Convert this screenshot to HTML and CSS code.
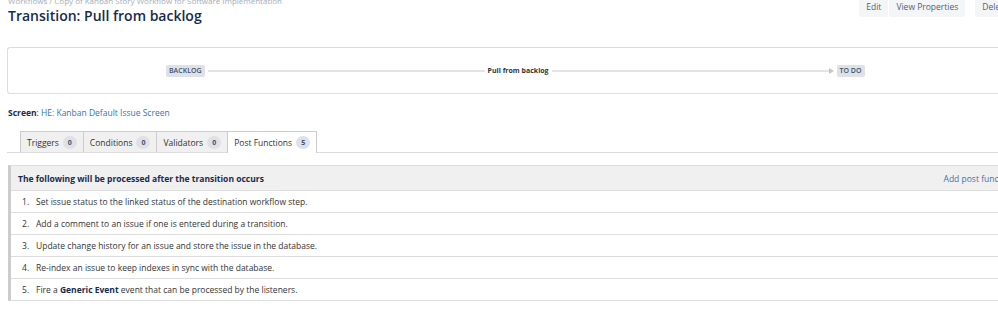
FILE: index.html
```html
<!DOCTYPE html>
<html lang="en">
<head>
    <meta charset="UTF-8">
    <title>Transition: Pull from backlog</title>
    <link rel="stylesheet" href="styles.css">
</head>
<body>

<div class="page-header">
    <div class="header-main">
        <div class="breadcrumbs">Workflows / Copy of Kanban Story Workflow for Software Implementation</div>
        <h1>Transition: Pull from backlog</h1>
    </div>
    <div class="header-actions">
        <a class="btn" href="#">Edit</a>
        <a class="btn" href="#">View Properties</a>
        <a class="btn btn-gap" href="#">Delete</a>
    </div>
</div>

<div class="diagram">
    <span class="status">BACKLOG</span>
    <span class="line"></span>
    <span class="transition-name">Pull from backlog</span>
    <span class="line"></span>
    <span class="arrow"></span>
    <span class="status">TO DO</span>
</div>

<p class="screen"><strong>Screen</strong>: <a href="#">HE: Kanban Default Issue Screen</a></p>

<div class="tabs">
    <a class="tab" href="#">Triggers <span class="badge">0</span></a>
    <a class="tab" href="#">Conditions <span class="badge">0</span></a>
    <a class="tab" href="#">Validators <span class="badge">0</span></a>
    <a class="tab active" href="#">Post Functions <span class="badge">5</span></a>
</div>

<div class="functions">
    <div class="functions-head">
        <strong>The following will be processed after the transition occurs</strong>
        <a href="#">Add post function</a>
    </div>
    <ol class="function-list">
        <li>Set issue status to the linked status of the destination workflow step.</li>
        <li>Add a comment to an issue if one is entered during a transition.</li>
        <li>Update change history for an issue and store the issue in the database.</li>
        <li>Re-index an issue to keep indexes in sync with the database.</li>
        <li>Fire a <strong>Generic Event</strong> event that can be processed by the listeners.</li>
    </ol>
</div>

</body>
</html>
```

FILE: styles.css
```css
body {
    margin: 0;
    padding: 0 0 0 8px;
    font-family: "Open Sans", Arial, sans-serif;
    font-size: 8.5px;
    color: #333;
    overflow: hidden;
    width: 1007px;
}
a {
    color: #3b73af;
    text-decoration: none;
}
.page-header {
    display: flex;
    justify-content: space-between;
    margin-top: -5px;
}
.breadcrumbs {
    color: #a5adba;
    font-size: 8px;
    line-height: 11px;
    white-space: nowrap;
}
h1 {
    margin: 0;
    font-size: 14px;
    font-weight: 600;
    color: #172b4d;
    line-height: 20px;
}
.header-actions {
    display: flex;
    align-items: flex-start;
    gap: 1px;
    padding-top: 2px;
}
.btn {
    background-color: #f4f5f7;
    color: #505f79;
    padding: 4px 7px;
    line-height: 12px;
    border-radius: 2px;
}
.btn-gap {
    margin-left: 9px;
}
.diagram {
    margin-top: 21px;
    display: flex;
    align-items: center;
    height: 45px;
    border: 1px solid #ddd;
    border-right: none;
    border-radius: 3px 0 0 3px;
    padding-left: 158px;
    margin-left: -1px;
}
.status {
    background-color: #dfe1e6;
    color: #42526e;
    font-size: 7px;
    font-weight: 600;
    padding: 1px 3px;
    line-height: 10px;
    border-radius: 2px;
}
.line {
    width: 277px;
    height: 2px;
    background-color: #e4e4e4;
    margin: 0 3px;
}
.transition-name {
    font-size: 7px;
    font-weight: 700;
    color: #333;
}
.arrow {
    width: 0;
    height: 0;
    border-top: 3px solid transparent;
    border-bottom: 3px solid transparent;
    border-left: 5px solid #c1c7d0;
    margin: 0 3px 0 -3px;
}
.screen {
    margin: 13px 0 0;
    line-height: 12px;
    color: #172b4d;
}
.tabs {
    display: flex;
    margin-top: 12px;
    padding-left: 13px;
    border-bottom: 1px solid #ddd;
    margin-left: -1px;
}
.tab {
    display: flex;
    align-items: center;
    gap: 4px;
    height: 20px;
    padding: 0 6px;
    background-color: #f0f0f0;
    border: 1px solid #ccc;
    border-right: none;
    border-bottom: none;
    color: #333;
    margin-bottom: -1px;
}
.tab.active {
    background-color: #fff;
    border-right: 1px solid #ccc;
    height: 21px;
}
.badge {
    background-color: #dfe1e6;
    border-radius: 7px;
    font-size: 7px;
    font-weight: 700;
    line-height: 13px;
    padding: 0 5px;
    color: #42526e;
}
.functions {
    margin-top: 12px;
    border: 1px solid #ddd;
    border-left: 3px solid #ccc;
    border-right: none;
}
.functions-head {
    display: flex;
    justify-content: space-between;
    align-items: center;
    height: 24px;
    background-color: #f0f0f0;
    padding: 0 1px 0 7px;
    border-bottom: 1px solid #ddd;
    color: #172b4d;
}
.function-list {
    margin: 0;
    padding: 0;
    list-style: none;
    counter-reset: step;
}
.function-list li {
    counter-increment: step;
    height: 21px;
    line-height: 21px;
    padding-left: 11px;
    border-bottom: 1px solid #ddd;
    color: #333;
}
.function-list li:last-child {
    border-bottom: none;
}
.function-list li::before {
    content: counter(step) ".";
    display: inline-block;
    width: 14px;
}
.function-list strong {
    color: #172b4d;
}
```
